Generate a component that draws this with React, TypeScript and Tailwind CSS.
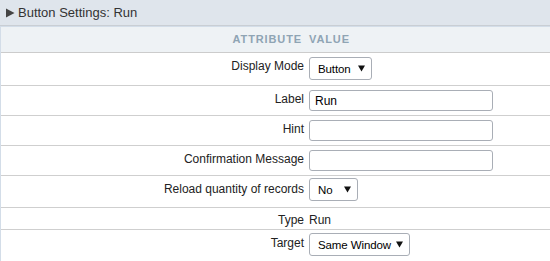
import React from 'react'

type Row =
  | { label: string; kind: 'select'; value: string; width: string; h: string; top: string }
  | { label: string; kind: 'input'; value: string; h: string; top: string }
  | { label: string; kind: 'text'; value: string; h: string; top: string }

const rows: Row[] = [
  { label: 'Display Mode', kind: 'select', value: 'Button', width: 'w-[63px]', h: 'h-[33px]', top: 'pt-[4px]' },
  { label: 'Label', kind: 'input', value: 'Run', h: 'h-[30px]', top: 'pt-[4px]' },
  { label: 'Hint', kind: 'input', value: '', h: 'h-[30px]', top: 'pt-[4px]' },
  { label: 'Confirmation Message', kind: 'input', value: '', h: 'h-[30px]', top: 'pt-[4px]' },
  { label: 'Reload quantity of records', kind: 'select', value: 'No', width: 'w-[49px]', h: 'h-[32px]', top: 'pt-[2px]' },
  { label: 'Type', kind: 'text', value: 'Run', h: 'h-[22px]', top: 'pt-[3px]' },
  { label: 'Target', kind: 'select', value: 'Same Window', width: 'w-[101px]', h: 'h-[33px]', top: 'pt-[3px]' },
]

function FakeSelect({ value, width }: { value: string; width: string }) {
  return (
    <div
      className={`${width} h-[23px] flex items-center justify-between gap-[4px] pl-[8px] pr-[6px] border border-[#a9aeb6] rounded-[3px] bg-white text-[11.5px] tracking-[-0.1px] text-black whitespace-nowrap`}
    >
      <span className="pt-[3px]">{value}</span>
      <svg width="7" height="7" viewBox="0 0 7 7" className="shrink-0" aria-hidden>
        <path d="M0 0.5h7L3.5 6.5z" fill="#111" />
      </svg>
    </div>
  )
}

export default function App() {
  return (
    <div className="w-[550px] bg-white font-['Liberation_Sans',Arial,sans-serif] text-[#222]">
      {/* panel title */}
      <div className="h-[26px] bg-[#dfe5ec] border-b border-[#c9ced4] flex items-center pl-[6px] text-[13px] text-[#333]">
        <svg width="9" height="10" viewBox="0 0 9 10" className="mr-[3px]" aria-hidden>
          <path d="M0 0.5L8.5 5L0 9.5z" fill="#444" />
        </svg>
        Button Settings: Run
      </div>

      <div className="border-l border-[#d3dde8] border-t border-[#cccccc]">
        {/* column header */}
        <div className="h-[26px] bg-[#eef2f5] border-b border-[#cccccc] grid grid-cols-[305px_1fr] items-center text-[11px] font-bold tracking-[0.08em] text-[#8fa4b4] uppercase">
          <div className="text-right pr-[4px]">Attribute</div>
          <div className="pl-[3px]">Value</div>
        </div>

        {rows.map((r) => (
          <div
            key={r.label}
            className={`${r.h} grid grid-cols-[305px_1fr] items-start border-b border-[#cfcfcf] last:border-b-0 text-[12px]`}
          >
            <div className={`text-right pr-[2px] ${r.kind === 'text' ? 'pt-[3px]' : 'pt-[4px]'}`}>{r.label}</div>
            <div className={`pl-[3px] ${r.top}`}>
              {r.kind === 'select' && <FakeSelect value={r.value} width={r.width} />}
              {r.kind === 'input' && (
                <div className="w-[184px] h-[21px] border border-[#a9aeb6] rounded-[3px] bg-white flex items-center pl-[5px] pt-[1px] text-black">
                  {r.value}
                </div>
              )}
              {r.kind === 'text' && <div>{r.value}</div>}
            </div>
          </div>
        ))}
      </div>
    </div>
  )
}
